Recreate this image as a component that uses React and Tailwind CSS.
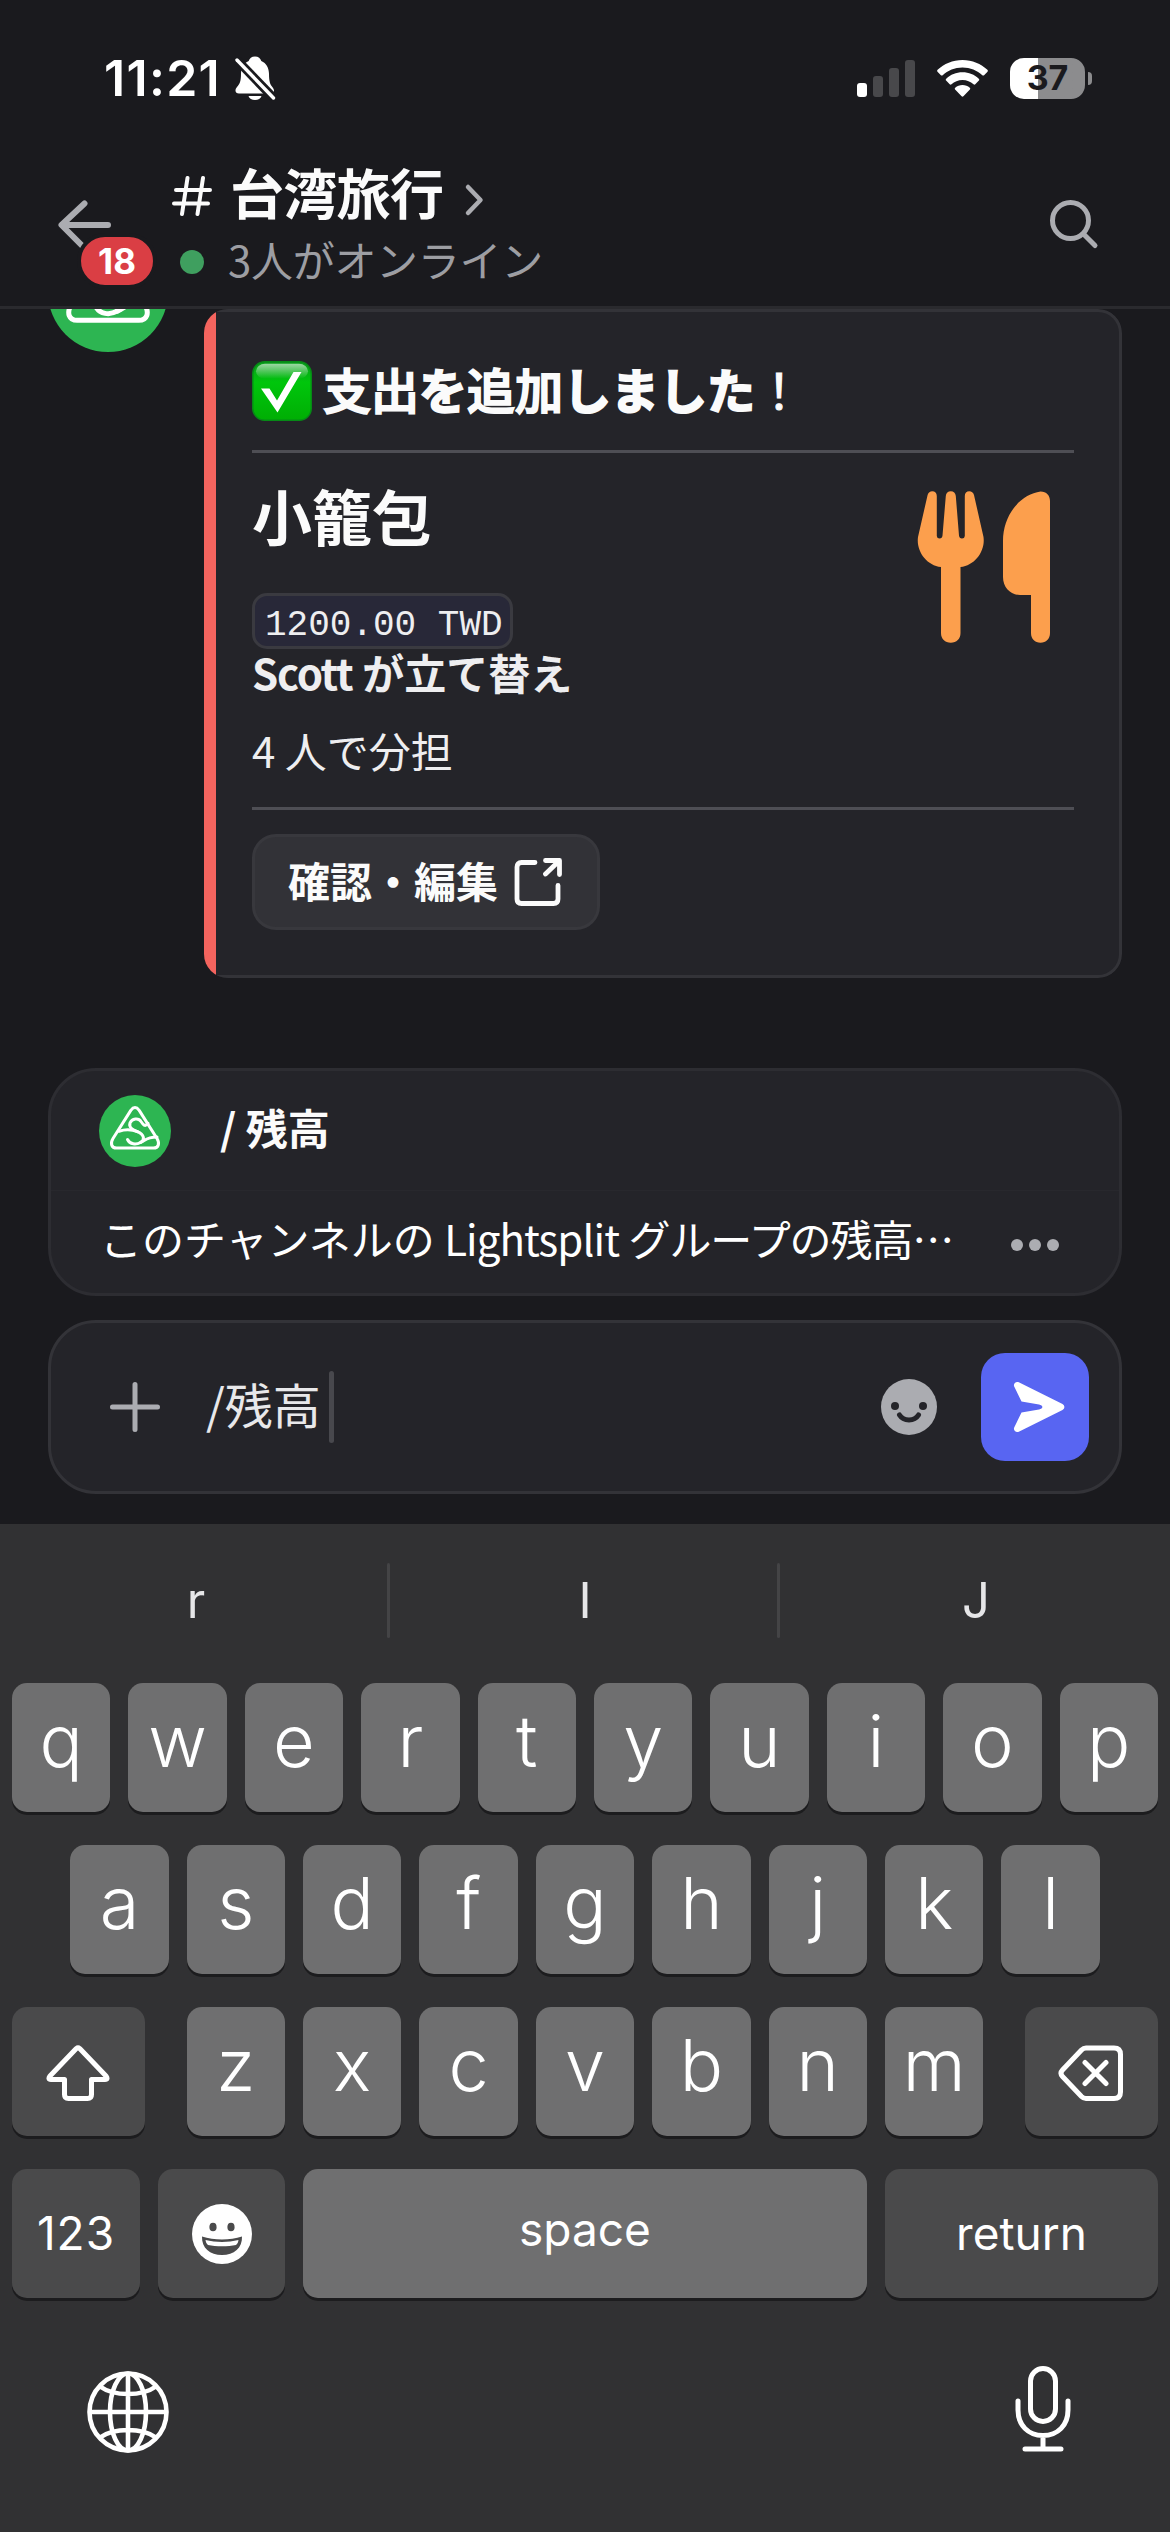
import React from "react";

const JP = "font-['Noto_Sans_CJK_JP',sans-serif]";

function Logo({ className }) {
  return (
    <svg viewBox="0 0 72 72" className={className} fill="none" stroke="#fff" strokeWidth="3" strokeLinecap="round" strokeLinejoin="round">
      <circle cx="36" cy="36" r="36" fill="#2db552" stroke="none" />
      <path d="M31.8 15.4Q36 9.800 40.200 15.400L58 43.500C61 48.500 59.500 53 54.500 53H17.500C12.500 53 11 48.500 14 43.500Z" />
      <path d="M49 28.300C46 32.500 44 29.500 42 26.500C39.500 22.500 33 23.300 31 28C29.500 33 34.500 35 38.500 36.700C45 39.500 46.500 45 41.500 47.500C37 50 31 49.500 28.500 44.500" />
      <path d="M20 36.200C25 34.600 32 34 38.500 36.700" />
      <path d="M41.500 47.500C46 46 47 42 58 42" />
    </svg>
  );
}

function BellOff() {
  return (
    <svg viewBox="0 0 42 46" className="ml-[13px] h-[46px] w-[42px]">
      <path d="M21 1.500c3.400 0 5.500 1.800 6.300 4.500 5 2.200 7.700 7 7.700 12.800 0 7.500 1 10.500 3.500 13.500 2.800 3.500 1.500 6.200-1.500 6.200H5c-3.500 0-4.800-3.200-2-6.500C6 28.500 7 26 7 18.800 7 13 9.700 8.200 14.700 6 15.500 3.300 17.600 1.500 21 1.500Z" fill="#fff" />
      <path d="M14.500 41h13c-.8 2.500-3.300 4-6.500 4s-5.700-1.500-6.500-4Z" fill="#fff" />
      <path d="M3 5 39.500 43" stroke="#1a1a1e" strokeWidth="9" />
      <path d="M3 5 39.500 43" stroke="#fff" strokeWidth="3.400" strokeLinecap="round" />
    </svg>
  );
}

function StatusBar() {
  return (
    <div className="flex h-[156px] items-center pr-[78px] pl-[104px] text-white">
      <div className="font-[Inter,sans-serif] text-[50px] leading-none font-semibold tracking-[1.3px]">11:21</div>
      <BellOff />
      <div className="ml-auto flex h-[37px] items-end gap-[6px]">
        <div className="h-[14px] w-[10px] rounded-[3px] bg-white" />
        <div className="h-[21px] w-[10px] rounded-[3px] bg-[#48484b]" />
        <div className="h-[29px] w-[10px] rounded-[3px] bg-[#48484b]" />
        <div className="h-[37px] w-[10px] rounded-[3px] bg-[#48484b]" />
      </div>
      <svg viewBox="0 0 51 37" className="ml-[22px] h-[37px] w-[51px]" fill="#fff">
        <path d="M25.500 0C35.300 0 44 3.800 50.400 9.800c.6.600.6 1.300.1 1.900l-3.400 3.500c-.5.500-1.200.5-1.800 0C40.200 10.500 33.200 7.600 25.500 7.600S10.800 10.500 5.700 15.200c-.6.500-1.300.5-1.800 0L.5 11.700c-.5-.6-.5-1.300.1-1.900C7 3.800 15.700 0 25.500 0Z" />
        <path d="M25.500 12.300c6.300 0 12 2.400 16.300 6.400.6.600.6 1.300.1 1.900l-3.600 3.700c-.5.500-1.200.5-1.800 0-2.900-2.700-6.700-4.300-11-4.300s-8.100 1.600-11 4.300c-.6.500-1.300.5-1.800 0l-3.600-3.700c-.5-.6-.5-1.300.1-1.900 4.300-4 10-6.400 16.300-6.400Z" />
        <path d="M25.500 25c2.800 0 5.300 1 7.300 2.700.6.600.6 1.200.1 1.700l-6.500 6.900c-.6.600-1.200.6-1.800 0l-6.500-6.900c-.5-.5-.5-1.100.1-1.700C20.200 26 22.700 25 25.500 25Z" />
      </svg>
      <div className="ml-[22px] flex h-[41px] w-[75px] items-center justify-center rounded-[14px] bg-linear-to-r from-white from-[28px] to-[#8c8c8e] to-[28px] font-[Inter,sans-serif] text-[34px] leading-none font-bold text-[#1a1a1e]">
        37
      </div>
      <div className="ml-[3px] h-[13px] w-[4px] rounded-r-full bg-[#8c8c8e]" />
    </div>
  );
}

function ChannelHeader() {
  return (
    <div className="flex h-[150px] px-[57px]">
      <div className="relative h-full w-[100px]">
        <svg viewBox="0 0 56 50" className="mt-[43px] h-[50px] w-[56px]" fill="none" stroke="#abacb1" strokeWidth="6" strokeLinecap="round" strokeLinejoin="round">
          <path d="M27.500 4.500 4.500 26 27.500 49M5 26H51" />
        </svg>
        <div className="absolute top-[77px] left-[20px] flex h-[56px] w-[80px] items-center justify-center rounded-[28px] border-4 border-[#1a1a1e] bg-[#da3e44] font-[Inter,sans-serif] text-[35px] leading-none font-bold text-white">
          18
        </div>
      </div>
      <div className="ml-[15px] pt-[3px]">
        <div className="flex h-[66px] items-center">
          <svg viewBox="0 0 40 40" className="mt-[7px] h-[40px] w-[40px]" fill="none" stroke="#fbfbfb" strokeWidth="4" strokeLinecap="round">
            <path d="M15.500 2 10 38M31 2 25.500 38M4 14H38M2 27.500H36" />
          </svg>
          <div className={"ml-[18px] text-[54px] leading-[66px] font-bold tracking-[-0.7px] text-[#fbfbfb] " + JP}>台湾旅行</div>
          <svg viewBox="0 0 20 34" className="mt-[15px] ml-[21px] h-[34px] w-[20px]" fill="none" stroke="#abacb1" strokeWidth="4.500" strokeLinecap="round" strokeLinejoin="round">
            <path d="M4 4 16.500 17 4 30" />
          </svg>
        </div>
        <div className="flex h-[68px] items-center">
          <div className="mt-[6px] ml-[8px] h-[24px] w-[24px] rounded-full bg-[#3f9f5f]" />
          <div className={"ml-[24px] text-[42px] leading-[66px] tracking-[-0.3px] text-[#9d9ea3] " + JP}>3人がオンライン</div>
        </div>
      </div>
      <svg viewBox="0 0 52 52" className="mt-[42px] mr-[13px] ml-auto h-[52px] w-[52px]" fill="none" stroke="#abacb1" strokeWidth="5" strokeLinecap="round">
        <circle cx="22.500" cy="22.500" r="18" />
        <path d="M36 36.500 47 47.500" />
      </svg>
    </div>
  );
}

function CheckEmoji() {
  return (
    <svg viewBox="0 0 60 60" className="h-[60px] w-[60px]">
      <defs>
        <linearGradient id="body" x1="0" y1="0" x2="0" y2="1">
          <stop offset="0" stopColor="#0a9a1c" />
          <stop offset="0.35" stopColor="#00c60c" />
          <stop offset="1" stopColor="#00ae04" />
        </linearGradient>
        <linearGradient id="gloss" x1="0" y1="0" x2="0" y2="1">
          <stop offset="0" stopColor="#fff" stopOpacity="0.6" />
          <stop offset="1" stopColor="#fff" stopOpacity="0" />
        </linearGradient>
      </defs>
      <rect x="0.750" y="0.750" width="58.500" height="58.500" rx="12" fill="url(#body)" stroke="#068a16" strokeWidth="1.500" />
      <rect x="4" y="2.800" width="52" height="15" rx="9" fill="url(#gloss)" />
      <path d="M9 27.500h8.500L25 39.500 41.500 11H49.500L25.500 51.500Z" fill="#fff" />
    </svg>
  );
}

function ForkKnife() {
  return (
    <svg viewBox="0 0 134 152" className="mt-[38px] mr-[23px] h-[152px] w-[134px]" fill="#fc9f4d">
      <path d="M10.600 4C11.500 1.500 13 .3 15.200 .3 18 .3 19.800 2 19.800 5V45Q20 47.500 22.600 47.500 25.200 47.500 25.500 44.500L28.800 5C29 2 31 .3 33.800 .3S38.500 2 38.800 5L42 44.500Q42.300 47.500 45 47.500 47.600 47.500 47.800 45V5C47.800 2 49.500 .3 52.300 .3 54.500 .3 56.200 1.500 57 4L66.500 46C68.500 60 58 74.500 43.500 76V142C43.500 148 39.500 151.700 33.800 151.700S24 148 24 142V76C9.500 74.500-1 60 1 46Z" />
      <path d="M123.500.5C129.500.5 133 4.500 133 10V142C133 148 129 151.700 123.500 151.700S114 148 114 142V104H103C93.500 104 86 96.500 86 86V50C86 24 103 3.500 123.500.5Z" />
    </svg>
  );
}

function ExpenseCard() {
  return (
    <div className={"flex h-[669px] w-[918px] overflow-hidden rounded-[24px] bg-[#242429] " + JP}>
      <div className="w-[12px] bg-[#f4645e]" />
      <div className="flex flex-1 flex-col rounded-r-[24px] border-y-3 border-r-3 border-[#333338] pr-[45px] pl-[36px]">
        <div className="flex h-[138px] items-center pt-[20px]">
          <CheckEmoji />
          <div className="ml-[11px] pb-[7px] text-[48px] leading-[60px] font-bold text-[#fbfbfb] [-webkit-text-stroke:2px]">
            <span className="font-medium">支出</span>を<span className="font-medium">追加</span>しました
            <span className="font-normal [-webkit-text-stroke:1px]">！</span>
          </div>
        </div>
        <div className="h-[3px] bg-[#4e4e54]" />
        <div className="flex h-[354px] justify-between">
          <div className="pt-[26px] text-[42px] text-[#eeeef0]">
            <div className="text-[60px] leading-[72px] font-bold text-[#fbfbfb]">小籠包</div>
            <div className="mt-[42px] flex h-[56px] w-[261px] items-center rounded-[15px] border-3 border-[#3a3a40] bg-[#282838] pt-[10px] pl-[10px] font-['Liberation_Mono',monospace] text-[36px] leading-none">
              1200.00 TWD
            </div>
            <div className="leading-[45px] font-bold">
              <span className="tracking-[-1.200px]">Scott</span> が立て替え
            </div>
            <div className="mt-[34px] leading-[44px]">4 人で分担</div>
          </div>
          <ForkKnife />
        </div>
        <div className="h-[3px] bg-[#4e4e54]" />
        <div className="mt-[24px] flex h-[96px] w-[348px] items-center rounded-[24px] border-3 border-[#38383d] bg-[#323237] pl-[33px]">
          <div className="pb-[4px] text-[42px] leading-[60px] font-bold text-[#fbfbfb]">確認・編集</div>
          <svg viewBox="0 0 48 48" className="ml-[16px] h-[48px] w-[48px]" fill="none" stroke="#fbfbfb" strokeWidth="4.800" strokeLinecap="round" strokeLinejoin="round">
            <path d="M21 4.500H7.500Q3 4.500 3 9V41Q3 45.500 7.500 45.500H39.500Q44 45.500 44 41V27.500M31.500 2.500H45.500V16.500M45 3 31.500 16" />
          </svg>
        </div>
      </div>
    </div>
  );
}

function CommandPanel() {
  return (
    <div className={"mx-[48px] mt-[90px] h-[228px] rounded-[48px] border-3 border-[#2d2d32] bg-[#242429] text-[42px] text-white " + JP}>
      <div className="flex h-[120px] items-center border-b border-[#28282d] pl-[48px]">
        <Logo className="h-[72px] w-[72px]" />
        <div className="ml-[49px] pb-[7px] leading-[60px] font-bold text-[#fbfbfb]">/ 残高</div>
      </div>
      <div className="flex h-[102px] items-center justify-between pr-[60px] pl-[49px]">
        <div className="pb-[9px] leading-[60px]">
          このチャンネルの <span className="tracking-[-0.900px]">Lightsplit</span> <span className="tracking-[-1.100px]">グループの残高…</span>
        </div>
        <div className="mt-[5px] flex gap-[6px]">
          <div className="h-[12px] w-[12px] rounded-full bg-[#acadb2]" />
          <div className="h-[12px] w-[12px] rounded-full bg-[#acadb2]" />
          <div className="h-[12px] w-[12px] rounded-full bg-[#acadb2]" />
        </div>
      </div>
    </div>
  );
}

function Composer() {
  return (
    <div className="mx-[48px] mt-[24px] flex h-[174px] items-center rounded-[48px] border-3 border-[#333338] bg-[#242429] pr-[30px] pl-[59px]">
      <svg viewBox="0 0 50 50" className="h-[50px] w-[50px]" stroke="#abacb1" strokeWidth="5" strokeLinecap="round">
        <path d="M25 2.500V47.500M2.500 25H47.500" />
      </svg>
      <div className={"ml-[46px] pb-[9px] text-[48px] leading-[66px] text-[#e8e8ea] " + JP}>/残高</div>
      <div className="ml-[8px] h-[72px] w-[5px] rounded-full bg-[#48484d]" />
      <svg viewBox="0 0 56 56" className="ml-auto h-[56px] w-[56px]">
        <circle cx="28" cy="28" r="28" fill="#abacb1" />
        <circle cx="14" cy="27" r="4" fill="#242429" />
        <circle cx="42" cy="27" r="4" fill="#242429" />
        <path d="M18.500 36C22.500 42.500 33.500 42.500 37.500 36" fill="none" stroke="#242429" strokeWidth="5" strokeLinecap="round" />
      </svg>
      <div className="ml-[44px] flex h-[108px] w-[108px] items-center justify-center rounded-[24px] bg-[#5865f2]">
        <svg viewBox="0 0 52 52" className="ml-[7px] h-[52px] w-[52px]" fill="#fff">
          <path d="M5.800 1.300 49.500 23C52 24.500 52 27.500 49.500 29L5.800 50.700C3 52 0 49.500 1.200 46.500L8.500 31.500 26 28.500C30.500 27.500 30.500 24.500 26 23.500L8.500 20.500 1.200 5.500C0 2.500 3 0 5.800 1.300Z" />
        </svg>
      </div>
    </div>
  );
}

const KEY = "flex h-[129px] justify-center rounded-[15px] shadow-[0_3px_0_#1c1c1e] ";

function LetterRow({ letters }) {
  return [...letters].map((c) => (
    <div key={c} className={KEY + "w-[98.4px] bg-[#6f6f70] text-[72px] leading-[116px] font-[360]"}>
      {c}
    </div>
  ));
}

function Keyboard() {
  return (
    <div className="mt-[30px] h-[1008px] bg-[#313133] px-[12px] font-[Inter,sans-serif] text-white">
      <div className="-mx-[12px] flex h-[159px] items-center pb-[7px] text-center text-[49px] leading-[75px] text-[#e6e6e8]">
        <div className="w-[387px] pl-[5px]">r</div>
        <div className="h-[75px] w-[3px] rounded-full bg-[#444446]" />
        <div className="w-[387px] pl-[3px]">I</div>
        <div className="h-[75px] w-[3px] rounded-full bg-[#444446]" />
        <div className="flex-1 pl-[2px]">J</div>
      </div>
      <div className="flex gap-[18px]">
        <LetterRow letters="qwertyuiop" />
      </div>
      <div className="mt-[33px] flex justify-center gap-[18px]">
        <LetterRow letters="asdfghjkl" />
      </div>
      <div className="mt-[33px] flex justify-between">
        <div className={KEY + "w-[133px] items-center bg-[#4a4a4b]"}>
          <svg viewBox="0 0 64 56" className="mt-[2px] mr-[2px] h-[56px] w-[64px]" fill="none" stroke="#fff" strokeWidth="5" strokeLinejoin="round">
            <path d="M30.300 3.500Q32 2 33.700 3.500L60 31Q62.500 34.500 59 34.500H45.500V49.500Q45.500 53.500 41.500 53.500H22.500Q18.500 53.500 18.500 49.500V34.500H5Q1.500 34.500 4 31Z" />
          </svg>
        </div>
        <div className="flex gap-[18px]">
          <LetterRow letters="zxcvbnm" />
        </div>
        <div className={KEY + "w-[133px] items-center bg-[#4a4a4b]"}>
          <svg viewBox="0 0 66 56" className="mt-[2px] h-[56px] w-[66px]" fill="none" stroke="#fff" strokeWidth="5" strokeLinecap="round" strokeLinejoin="round">
            <path d="M28 3H56Q62.500 3 62.500 9.500V47Q62.500 53.500 56 53.500H28Q25.500 53.500 23.500 51.500L4.500 31.500Q1.500 28.200 4.500 25L23.500 5Q25.500 3 28 3ZM27 17.500 48 38.500M48 17.500 27 38.500" />
          </svg>
        </div>
      </div>
      <div className="mt-[33px] flex gap-[18px] text-[46px] font-[370]">
        <div className={KEY + "w-[128px] bg-[#4a4a4b] leading-[129px] tracking-[1px]"}>123</div>
        <div className={KEY + "w-[127px] items-center bg-[#4a4a4b]"}>
          <svg viewBox="0 0 60 60" className="h-[60px] w-[60px]">
            <circle cx="30" cy="30" r="30" fill="#fff" />
            <ellipse cx="21" cy="23" rx="3.600" ry="4.300" fill="#4a4a4b" />
            <ellipse cx="39" cy="23" rx="3.600" ry="4.300" fill="#4a4a4b" />
            <path d="M10 32.500C22 36.500 38 36.500 50 32.500 50.500 44 42 51 30 51S9.500 44 10 32.500Z" fill="#4a4a4b" />
            <path d="M13.500 36C24 38.500 36 38.500 46.500 36 46 38.500 45.500 39.500 44 41 36 42.800 24 42.800 16 41 14.500 39.500 14 38.500 13.500 36Z" fill="#fff" />
          </svg>
        </div>
        <div className={KEY + "flex-1 bg-[#6f6f70] leading-[120px]"}>space</div>
        <div className={KEY + "w-[273px] bg-[#4a4a4b] leading-[129px]"}>return</div>
      </div>
      <div className="flex justify-between pt-[68px] pr-[86px] pl-[75px]">
        <svg viewBox="0 0 82 82" className="mt-[5px] h-[82px] w-[82px]" fill="none" stroke="#fff" strokeWidth="4.600">
          <circle cx="41" cy="41" r="38.500" />
          <ellipse cx="41" cy="41" rx="18" ry="38.500" />
          <path d="M41 2V80M2 41H80M13 15.500C27 25.500 55 25.500 69 15.500M13 66.500C27 56.500 55 56.500 69 66.500" />
        </svg>
        <svg viewBox="0 0 58 88" className="h-[88px] w-[58px]" fill="none" stroke="#fff" strokeWidth="5" strokeLinecap="round">
          <rect x="16.500" y="2.500" width="25" height="53" rx="12.500" />
          <path d="M4 35V44C4 59 14 69.500 29 69.500S54 59 54 44V35M29 70V83M11 83H47" />
        </svg>
      </div>
    </div>
  );
}

export default function App() {
  return (
    <div lang="ja" className="flex h-[2532px] w-[1170px] flex-col overflow-hidden bg-[#1a1a1e]">
      <div className="border-b-3 border-[#2a2a2e]">
        <StatusBar />
        <ChannelHeader />
      </div>
      <div className="flex h-[669px] shrink-0 overflow-hidden pl-[48px]">
        <Logo className="-mt-[77px] mr-[36px] h-[120px] w-[120px]" />
        <ExpenseCard />
      </div>
      <CommandPanel />
      <Composer />
      <Keyboard />
    </div>
  );
}
